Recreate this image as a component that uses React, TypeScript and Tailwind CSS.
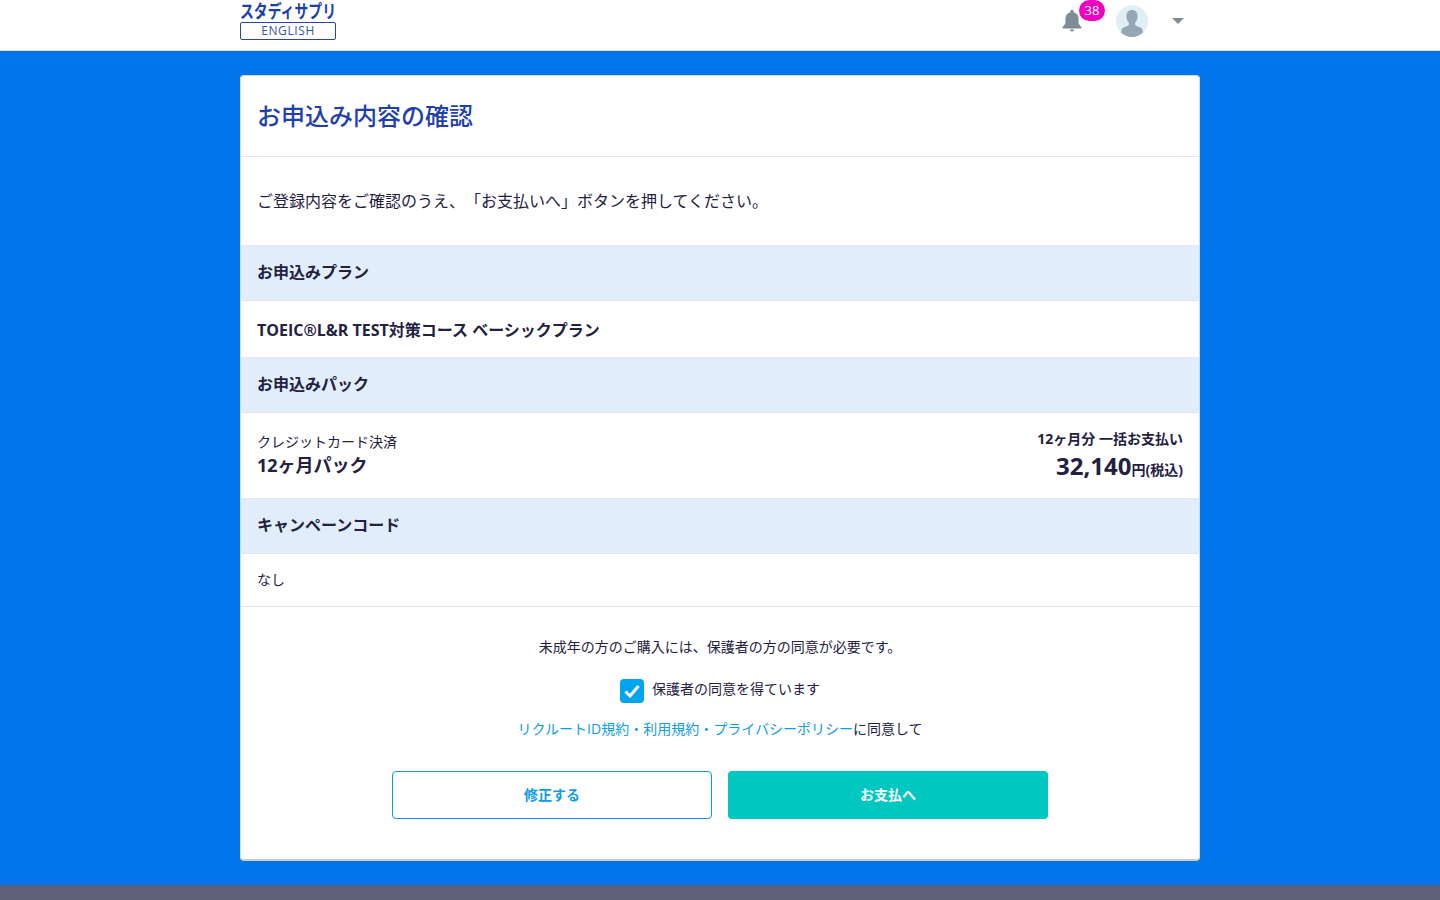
const font = { fontFamily: '"Open Sans", "Noto Sans CJK JP", sans-serif' };

function SectionTitle({ children }: { children: string }) {
  return (
    <div className="h-[56px] flex items-center px-4 pb-[2px] bg-[#e1edfb] border-y border-[#e3e6ea] text-[16px] font-bold text-[#23213f] -mb-px">
      {children}
    </div>
  );
}

function Header() {
  return (
    <header className="h-[51px] bg-white border-b border-[#dfe3e6]">
      <div className="w-[960px] mx-auto h-full flex justify-between relative">
        <div className="w-[96px]">
          <div className="h-[22px] text-[18px] leading-[23px] font-bold text-[#1a3db0] whitespace-nowrap origin-left scale-x-[0.77]">
            スタディサプリ
          </div>
          <div className="h-[18px] border border-[#2b46a8] rounded-[2px] flex items-center justify-center text-[12px] tracking-[0.6px] text-[#3b54a8]">
            ENGLISH
          </div>
        </div>
        <div className="flex items-start pr-[16px]">
          <div className="relative mt-[9px] mr-[32px]">
            <svg width="24" height="24" viewBox="0 0 24 24" fill="#7f8c96">
              <path d="M12 .8c-1 0-1.700.7-1.700 1.700v.7C7 4 5.400 6.800 5.400 10.200v4.400L2.600 18.200v1.200h18.800v-1.200l-2.800-3.600v-4.400c0-3.400-1.600-6.200-4.900-7v-.7c0-1-.7-1.700-1.700-1.700z" />
              <path d="M9.600 20.500h4.800c-.4 1.200-1.300 1.900-2.400 1.900s-2-.7-2.400-1.900z" />
            </svg>
            <span className="absolute left-[19px] -top-[9px] w-[26px] h-[21px] rounded-full bg-[#f000c0] text-white text-[13px] font-medium flex items-center justify-center">
              38
            </span>
          </div>
          <div className="w-[32px] h-[32px] mt-[5px] rounded-full bg-[#e0eff6] overflow-hidden">
            <svg width="32" height="32" viewBox="0 0 32 32" fill="#93a8b4">
              <path d="M16 5c-3.600 0-5.600 2.600-5.600 6.200 0 2.600 1 5 2.500 6.400v2.200c0 1-3.400 1.800-5.600 3-1.200.7-1.800 1.700-2 3.200v6h21.400v-6c-.2-1.500-.8-2.500-2-3.200-2.200-1.200-5.600-2-5.600-3v-2.200c1.500-1.400 2.500-3.800 2.500-6.400C21.600 7.600 19.600 5 16 5z" />
            </svg>
          </div>
          <div className="ml-[24px] mt-[18px] w-0 h-0 border-x-[6px] border-x-transparent border-t-[6px] border-t-[#7f8c96]" />
        </div>
      </div>
    </header>
  );
}

export default function App() {
  return (
    <div
      style={font}
      className="min-h-[900px] h-[900px] overflow-hidden bg-[#0074eb] flex flex-col text-[#23213f] [text-spacing-trim:space-all]"
    >
      <Header />
      <main className="flex-1 pt-[24px]">
        <div className="w-[960px] h-[786px] mx-auto bg-white rounded-[4px] border border-[#d5dbe0] border-b-[#c6cbcf] border-b-2 flex flex-col">
          <h1 className="h-[81px] flex items-center pl-[16px] text-[24px] font-medium text-[#1f3fae] border-b border-[#e3e6ea]">
            お申込み内容の確認
          </h1>
          <p className="h-[88px] flex items-center px-4 text-[16px]">
            ご登録内容をご確認のうえ、「お支払いへ」ボタンを押してください。
          </p>
          <SectionTitle>お申込みプラン</SectionTitle>
          <div className="h-[57px] flex items-center px-4 pt-[2px] text-[16px] font-bold">
            TOEIC®L&amp;R TEST対策コース ベーシックプラン
          </div>
          <SectionTitle>お申込みパック</SectionTitle>
          <div className="h-[86px] flex items-center justify-between px-4">
            <div className="pt-[1px]">
              <div className="text-[14px] leading-[20px]">クレジットカード決済</div>
              <div className="text-[18px] leading-[27px] font-bold">12ヶ月パック</div>
            </div>
            <div className="text-right pt-[6px]">
              <div className="text-[14px] leading-[20px] font-bold">12ヶ月分 一括お支払い</div>
              <div className="text-[14px] leading-[34px] font-bold">
                <span className="text-[24px]">32,140</span>円(税込)
              </div>
            </div>
          </div>
          <SectionTitle>キャンペーンコード</SectionTitle>
          <div className="h-[54px] flex items-center px-4 text-[14px] border-b border-[#e3e6ea]">なし</div>
          <div className="flex flex-col items-center text-[14px] pt-[30px]">
            <p className="leading-[20px]">未成年の方のご購入には、保護者の方の同意が必要です。</p>
            <label className="flex items-center gap-[8px] mt-[22px] h-[24px]">
              <span className="w-[24px] h-[24px] rounded-[4px] bg-[#00a4ef] flex items-center justify-center">
                <svg width="16" height="14" viewBox="0 0 16 14" fill="none" stroke="white" strokeWidth="3">
                  <path d="M1.500 7.500l4.500 4.500 8.500-10" />
                </svg>
              </span>
              <span className="pb-[5px]">保護者の同意を得ています</span>
            </label>
            <p className="mt-[16px] leading-[20px]">
              <span className="text-[#0d9ce6]">リクルートID規約・利用規約・プライバシーポリシー</span>に同意して
            </p>
            <div className="flex gap-[16px] mt-[32px]">
              <button className="w-[320px] h-[48px] pb-[2px] rounded-[4px] border border-[#0d9ce6] text-[#0d9ce6] font-bold">
                修正する
              </button>
              <button className="w-[320px] h-[48px] pb-[2px] rounded-[4px] bg-[#00c8c0] text-white font-bold">
                お支払へ
              </button>
            </div>
          </div>
        </div>
      </main>
      <div className="h-[15px] bg-[#5c6079]" />
    </div>
  );
}
